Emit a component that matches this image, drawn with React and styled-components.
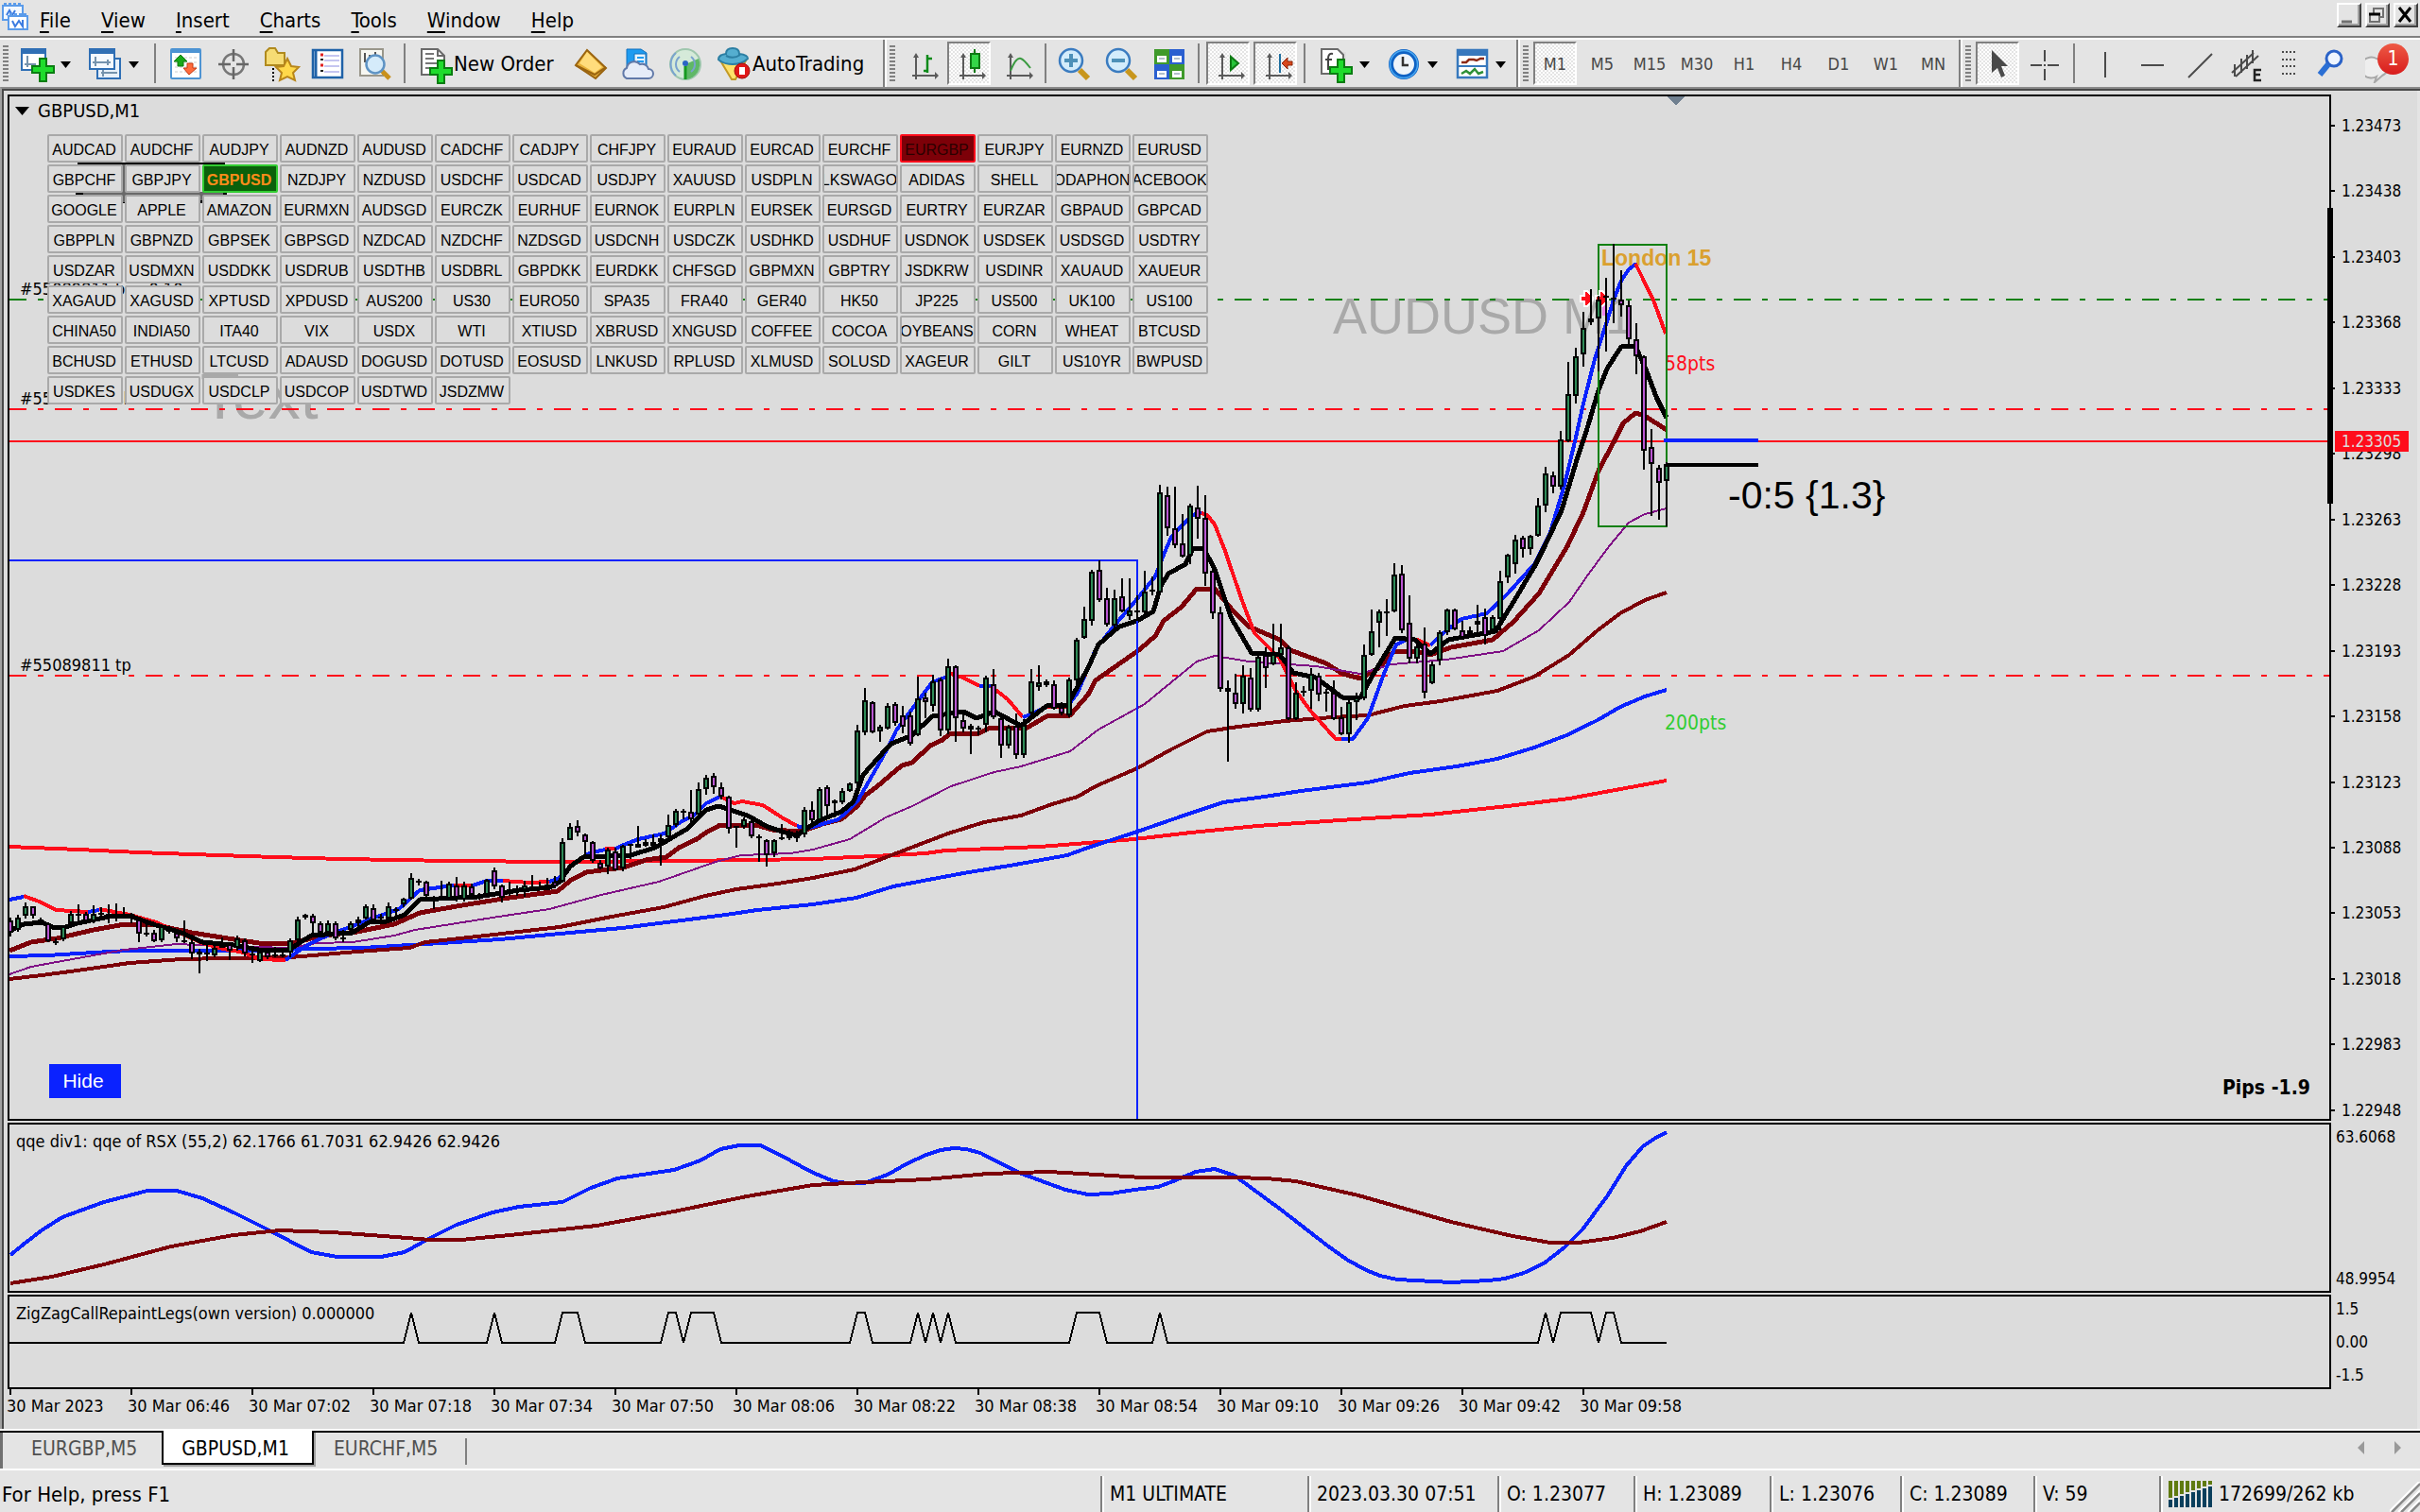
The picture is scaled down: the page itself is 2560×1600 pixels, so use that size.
import React from "react";
import styled, { createGlobalStyle, css } from "styled-components";

const UI = `"DejaVu Sans Condensed", "Noto Sans", "Liberation Sans", sans-serif`;
const ARIAL = `"Liberation Sans", Arial, sans-serif`;
const C = {
  chrome: "#e4e4e4",
  paper: "#dcdcdc",
  red: "#ff0d1b",
  blue: "#0a22ff",
  maroon: "#7d0008",
  green: "#108010",
  grey: "#808080",
};

const Global = createGlobalStyle`
  * { box-sizing: border-box; }
  body { margin: 0; background: ${C.chrome}; color: #000; font: 21px/26px ${UI}; }
  button { font: inherit; color: inherit; background: none; border: 0; padding: 0; margin: 0; }
`;

/* ---------- shell ---------- */
const Shell = styled.div`
  display: grid;
  grid-template-rows: auto auto minmax(0, 1fr) auto auto;
  height: 100vh;
  overflow: hidden;
`;

const MenuBar = styled.nav`
  display: flex;
  align-items: center;
  height: 42px;
  padding: 0 2px 4px 2px;
  border-bottom: 2px solid #fff;
  box-shadow: inset 0 -2px 0 ${C.grey};
`;
const MenuItem = styled.button`
  padding: 8px 16px 0;
  font-size: 22px;
  line-height: 28px;
  &::first-letter { text-decoration: underline; text-underline-offset: 4px; }
`;
const MenuIcon = styled.svg`
  width: 28px;
  height: 30px;
  margin-right: -4px;
`;
const WindowButtons = styled.div`
  display: flex;
  gap: 4px;
  margin-left: auto;
  padding-bottom: 4px;
`;
const WindowButton = styled.button`
  width: 26px;
  height: 26px;
  background: ${C.chrome};
  border: 2px solid;
  border-color: #fff #404040 #404040 #fff;
  box-shadow: inset -2px -2px 0 #a0a0a0;
  svg { display: block; width: 22px; height: 22px; }
`;

/* ---------- toolbar ---------- */
const ToolBar = styled.div`
  display: flex;
  align-items: center;
  gap: 4px;
  height: 50px;
  padding: 0 12px 0 2px;
`;
const Grip = styled.i`
  width: 8px;
  height: 38px;
  padding: 0 1px;
  background: repeating-linear-gradient(${C.grey} 0 2px, transparent 2px 4px) content-box;
`;
const Rule = styled.i`
  width: ${(p) => (p.$wide ? 12 : 8)}px;
  height: ${(p) => (p.$short ? 36 : 42)}px;
  background: linear-gradient(${C.grey}, ${C.grey}) center bottom / 2px ${(p) => (p.$short ? 28 : 42)}px no-repeat;
`;
const BandEdge = styled.i`
  width: 2px;
  height: 50px;
  background: ${C.grey};
  box-shadow: 2px 0 0 #fff;
`;
const pressed = css`
  border: 2px solid;
  border-color: ${C.grey} #fff #fff ${C.grey};
  background: conic-gradient(#fff 25%, ${C.chrome} 0 50%, #fff 0 75%, ${C.chrome} 0) 0 0 / 4px 4px;
`;
const Tool = styled.button`
  flex: none;
  display: flex;
  align-items: center;
  justify-content: ${(p) => (p.$start ? "flex-start" : "center")};
  width: ${(p) => p.$w || 46}px;
  height: 46px;
  padding-top: 2px;
  padding-left: ${(p) => (p.$start ? 8 : 0)}px;
  font-size: ${(p) => (p.$tf ? 18 : 22)}px;
  white-space: nowrap;
  ${(p) => p.$tf && `color: #484848;`}
  ${(p) => p["aria-pressed"] && pressed}
`;
const Icon = styled.svg`
  flex: none;
  width: 36px;
  height: 36px;
  overflow: visible;
`;
const Caret = styled.svg`
  width: 11px;
  height: 7px;
  margin-left: 6px;
`;
const Alerts = styled.button`
  position: relative;
  width: 46px;
  height: 42px;
  margin-left: auto;
`;
const Badge = styled.span`
  position: absolute;
  top: 0;
  right: 0;
  width: 33px;
  height: 33px;
  border-radius: 50%;
  background: linear-gradient(#ee5a45, #d81c1c);
  color: #fff;
  font-size: 21px;
  line-height: 33px;
  text-align: center;
`;

/* ---------- chart window ---------- */
const Workspace = styled.main`
  display: grid;
  grid-template-columns: minmax(0, 1fr) 94px;
  grid-template-rows: minmax(0, 1fr) 180px 100px 40px;
  row-gap: 2px;
  border-top: 2px solid #8a8a8a;
  border-left: 2px solid #a0a0a0;
  box-shadow: inset 2px 2px 0 #484848, inset -3px 0 0 ${C.chrome};
  padding: 6px 0 0 6px;
  background: ${C.paper};
  font-size: 18px;
  line-height: 22px;
`;
const Pane = styled.section`
  position: relative;
  border: 2px solid #000;
  overflow: hidden;
`;
const Plot = styled.svg`
  position: absolute;
  inset: 0;
  width: 100%;
  height: 100%;
  fill: none;
  shape-rendering: crispEdges;
`;
const PaneTitle = styled.h2`
  position: relative;
  display: flex;
  align-items: center;
  gap: 9px;
  margin: 0;
  padding: ${(p) => (p.$main ? "4px 6px" : "7px 7px")};
  font-size: ${(p) => (p.$main ? 20 : 18)}px;
  font-weight: 400;
  line-height: 22px;
`;
const Note = styled.span`
  position: absolute;
  left: ${(p) => p.$x}px;
  top: ${(p) => p.$y}px;
  color: ${(p) => p.$color || "#000"};
  font-family: ${(p) => (p.$arial ? ARIAL : UI)};
  font-size: ${(p) => p.$size || 18}px;
  font-weight: ${(p) => (p.$bold ? 700 : 400)};
  line-height: 1;
  white-space: nowrap;
`;
const Pips = styled.strong`
  position: absolute;
  right: 20px;
  bottom: 21px;
  font-size: 21px;
  line-height: 24px;
`;
const HideButton = styled.button`
  position: absolute;
  left: 42px;
  bottom: 22px;
  width: 76px;
  height: 36px;
  padding-right: 4px;
  background: ${C.blue};
  color: #fff;
  font: 21px/36px ${ARIAL};
`;
const SymbolGrid = styled.div`
  position: relative;
  display: grid;
  grid-template-columns: repeat(15, 80px);
  grid-auto-rows: 30px;
  gap: 2px;
  margin: 10px 0 0 40px;
`;
const tones = {
  up: css`background: #0b600b; border-color: #32cd32; color: #ff8c1a; font-weight: 700;`,
  down: css`background: #7d0008; border-color: ${C.red}; color: #2b0000;`,
};
const SymbolButton = styled.button`
  display: flex;
  align-items: center;
  justify-content: center;
  padding: 3px 2px 0 0;
  border: 2px solid #a9a9a9;
  border-radius: 2px;
  background: ${C.paper};
  font: 16px/23px ${ARIAL};
  overflow: hidden;
  white-space: nowrap;
  ${(p) => tones[p.$tone]}
`;
const Axis = styled.ol`
  position: relative;
  display: flex;
  flex-direction: column;
  justify-content: space-between;
  margin: 0;
  padding: ${(p) => p.$pad || "0"};
  list-style: none;
  font-size: 17px;
  line-height: 22px;
`;
const AxisMark = styled.li`
  display: flex;
  align-items: center;
  gap: ${(p) => (p.$tick ? 7 : 5)}px;
  &::before {
    content: "";
    width: ${(p) => (p.$tick ? 4 : 0)}px;
    height: 2px;
    background: #000;
  }
`;
const PriceNow = styled.li`
  position: absolute;
  left: 4px;
  top: 356px;
  width: 78px;
  height: 22px;
  padding-left: 7px;
  background: ${C.red};
  color: ${C.paper};
`;
const RangeBar = styled.li`
  position: absolute;
  left: -4px;
  top: 120px;
  width: 6px;
  height: 313px;
  background: #000;
`;
const TimeAxis = styled.ol`
  display: flex;
  grid-column: 1 / -1;
  margin: -2px 0 0 -1px;
  padding: 0;
  list-style: none;
`;
const TimeMark = styled.li`
  flex: none;
  width: 128px;
  white-space: nowrap;
  line-height: 24px;
  &::before {
    content: "";
    display: block;
    width: 2px;
    height: 6px;
    margin-left: 3px;
    background: #000;
  }
`;

/* ---------- tabs and status ---------- */
const TabBar = styled.div`
  display: flex;
  height: 44px;
  padding: 0 20px 4px 12px;
  border-top: 2px solid #fff;
  border-bottom: 2px solid #fff;
  box-shadow: inset 0 2px 0 #000, inset 3px 0 0 #707070;
`;
const Tab = styled.button`
  padding: 0 26px 0 21px;
  color: #505050;
  font-size: 21px;
  line-height: 38px;
  ${(p) => p["aria-selected"] && css`
    background: #fff;
    color: #000;
    border: solid #000;
    border-width: 0 2px 2px 2px;
    padding: 0 24px 0 19px;
    box-shadow: 2px 2px 0 #a0a0a0;
  `}
`;
const TabScroll = styled.div`
  display: flex;
  gap: 32px;
  margin-left: auto;
  align-items: center;
`;
const StatusBar = styled.footer`
  display: flex;
  height: 44px;
  padding: 6px 0 0;
  line-height: 41px;
`;
const Cell = styled.span`
  flex: none;
  display: flex;
  align-items: center;
  gap: 7px;
  width: ${(p) => p.$w}px;
  height: 38px;
  padding-left: 8px;
  border-left: 2px solid ${C.grey};
  box-shadow: inset 2px 0 0 #fff;
  white-space: nowrap;
`;
const HelpCell = styled.span`
  flex: 1;
  padding-left: 2px;
  font-size: 22px;
  line-height: 40px;
`;
const Bars = styled.svg`
  width: 46px;
  height: 28px;
`;
const Corner = styled.svg`
  width: 32px;
  height: 32px;
  margin-left: auto;
  align-self: flex-end;
`;

/* ---------- icon drawings ---------- */
const Plus = ({ x = 12, y = 12 }) => (
  <path
    transform={`translate(${x} ${y})`}
    d="M8 0h7v8h8v7h-8v9H8v-9H0V8h8z"
    fill="#1fdc2c"
    stroke="#0a7d12"
    strokeWidth="2"
  />
);
const Axes = () => (
  <>
    <path d="M12 34V9M8 30h26" stroke="#5a5a5a" strokeWidth="2" fill="none" />
    <path d="M12 6l-3 5h6zM36 30l-4-4v8z" fill="#5a5a5a" />
  </>
);
const icons = {
  newChart: (
    <>
      <rect x="1" y="2" width="25" height="22" fill="#fff" stroke="#2f6fb5" strokeWidth="2" />
      <path d="M1 3h25v4H1z" fill="#2f6fb5" />
      <path d="M7 9v12M4 18h12" stroke="#7593ad" strokeWidth="2" />
      <Plus />
    </>
  ),
  profiles: (
    <>
      <rect x="9" y="12" width="24" height="21" fill="#e8f1fa" stroke="#2f6fb5" strokeWidth="2" />
      <path d="M13 27h17M15 24v7" stroke="#7593ad" strokeWidth="2" />
      <rect x="1" y="2" width="26" height="21" fill="#f4f9ff" stroke="#2f6fb5" strokeWidth="2" />
      <path d="M1 3h26v4H1z" fill="#2f6fb5" />
      <path d="M7 10v10M4 16h19M20 13v6" stroke="#7593ad" strokeWidth="2" />
    </>
  ),
  market: (
    <>
      <rect x="2" y="2" width="31" height="31" rx="1" fill="#fff" stroke="#4d94d3" strokeWidth="2" />
      <path d="M2 2h31v4H2z" fill="#4d94d3" />
      <path d="M6 11h24M6 16h24M6 21h24M6 26h24" stroke="#ccc" strokeDasharray="3 2" />
      <path d="M12 8l7 7h-4v5H9v-5H5z" fill="#18a818" stroke="#0b7a0b" />
      <path d="M21 29l-6-7h4v-5h6v5h4z" fill="#ff6a3c" stroke="#c43a12" />
    </>
  ),
  target: (
    <>
      <circle cx="18" cy="18" r="11" fill="none" stroke="#777" strokeWidth="2.5" />
      <path d="M18 2v13M18 21v13M2 18h13M21 18h13" stroke="#666" strokeWidth="2.5" />
    </>
  ),
  favorites: (
    <>
      <path d="M2 5l4-4h6l3 5h7v13H2z" fill="#f6dc74" stroke="#b08a1e" strokeWidth="2" />
      <path d="M10 22v14" stroke="#000" strokeWidth="2" strokeDasharray="2 2" />
      <path d="M25 12l4 8 8 1-6 6 2 8-8-4-8 4 2-8-6-6 8-1z" fill="#ffd94a" stroke="#b8861b" strokeWidth="2" />
    </>
  ),
  navigator: (
    <>
      <rect x="2" y="3" width="31" height="29" fill="#fff" stroke="#1f62a8" strokeWidth="2.5" />
      <path d="M5 4v27" stroke="#1f62a8" strokeWidth="3" />
      <path d="M14 9h16M14 14h16M14 20h16M14 26h16" stroke="#c5c5f0" strokeWidth="2" />
      <path d="M10 8h3M10 19h3" stroke="#e02020" strokeWidth="3" />
      <path d="M10 13h3M10 25h3" stroke="#222" strokeWidth="2" />
    </>
  ),
  tester: (
    <>
      <path d="M2 2h24v28H2z" fill="#f7f7f2" stroke="#99968a" strokeWidth="2" />
      <path d="M7 6v10M18 5v8M12 8v6" stroke="#555" strokeWidth="2" />
      <path d="M25 25l8 8" stroke="#c8901c" strokeWidth="5" />
      <circle cx="18" cy="18" r="9.5" fill="#d5ebfa" stroke="#5e93c4" strokeWidth="2.5" />
    </>
  ),
  order: (
    <>
      <path d="M2 2h17l7 7v20H2z" fill="#fff" stroke="#6a6a6a" strokeWidth="2" />
      <path d="M19 2v7h7" fill="none" stroke="#6a6a6a" strokeWidth="2" />
      <path d="M6 7h9M6 12h9M6 17h14M6 22h8" stroke="#777" strokeWidth="2" />
      <Plus x={11} y={14} />
    </>
  ),
  gold: (
    <>
      <path d="M14 3l20 19-11 11L2 19z" fill="#e9b23a" stroke="#9a6410" strokeWidth="2" />
      <path d="M14 5l16 16-8 6L6 17z" fill="#ffdc7c" />
      <path d="M2 19l20 10 12-8" fill="none" stroke="#9a6410" strokeWidth="2" />
    </>
  ),
  cloud: (
    <>
      <path d="M6 2h15l6 4v18H6z" fill="#1e9bf0" stroke="#1270bd" />
      <path d="M14 7h12v13H14z" fill="#e9f5ff" stroke="#1270bd" />
      <path d="M17 11h7M17 15h7" stroke="#1e9bf0" strokeWidth="2" />
      <path d="M6 33a6 6 0 010-11 8 8 0 0114-4 7 7 0 019 5 5 5 0 010 10z" fill="#e6ecf8" stroke="#6179a8" strokeWidth="2" />
    </>
  ),
  signal: (
    <>
      <circle cx="18" cy="18" r="16" fill="#d5ead9" stroke="#9fc7ae" strokeWidth="2" />
      <path d="M18 18l1 16a16 16 0 0013-22z" fill="#5fb867" />
      <path d="M8 30A16 16 0 018 6M12 26a10 10 0 010-16M24 10a10 10 0 010 16" fill="none" stroke="#7aa3cf" strokeWidth="2" />
      <circle cx="18" cy="17" r="3" fill="#2b64c4" />
      <path d="M18 20v14" stroke="#169a20" strokeWidth="3" />
    </>
  ),
  auto: (
    <>
      <path d="M2 14l12 20h4l11-20z" fill="#ffe169" stroke="#c39a24" strokeWidth="2" />
      <path d="M0 13q0-5 8-6 0-6 7-6t7 6q9 1 9 5-6 6-16 6T0 13z" fill="#55aed0" stroke="#2c7fa3" strokeWidth="2" />
      <path d="M8 9q8 4 15-1" stroke="#2c7fa3" fill="none" strokeWidth="2" />
      <circle cx="25" cy="25" r="8" fill="#e01818" stroke="#a30e0e" />
      <path d="M22 21h6v8h-6z" fill="#fff" />
    </>
  ),
  bars: (
    <>
      <Axes />
      <path d="M24 8v19M24 12h5M20 25h4" stroke="#0e8a1a" strokeWidth="2.5" />
    </>
  ),
  candles: (
    <>
      <Axes />
      <path d="M24 2v25" stroke="#0e7a14" strokeWidth="2" />
      <path d="M20 7h9v15h-9z" fill="#35d648" stroke="#0e7a14" strokeWidth="2" />
    </>
  ),
  line: (
    <>
      <Axes />
      <path d="M12 25Q18 10 23 12q3 1 10 10" fill="none" stroke="#3a9a40" strokeWidth="2" />
    </>
  ),
  zoomIn: (
    <>
      <path d="M23 24l9 9" stroke="#c8961c" strokeWidth="6" />
      <circle cx="14" cy="14" r="12" fill="#d3ecfb" stroke="#3b7cc0" strokeWidth="2.5" />
      <path d="M14 7v14M7 14h14" stroke="#4d90b8" strokeWidth="4" />
    </>
  ),
  zoomOut: (
    <>
      <path d="M23 24l9 9" stroke="#c8961c" strokeWidth="6" />
      <circle cx="14" cy="14" r="12" fill="#d3ecfb" stroke="#3b7cc0" strokeWidth="2.5" />
      <path d="M7 14h14" stroke="#4d90b8" strokeWidth="4" />
    </>
  ),
  tiles: (
    <>
      <path d="M2 2h16v16H2zM18 18h16v16H18z" fill="#3f9a2b" />
      <path d="M18 2h16v16H18zM2 18h16v16H2z" fill="#2a5fd0" />
      <path d="M5 9h10v7H5zM21 9h10v7H21zM5 25h10v7H5zM21 25h10v7H21z" fill="#fff" />
      <path d="M7 12h6M23 12h6M7 28h6M23 28h6" stroke="#9ab" strokeWidth="1.5" />
    </>
  ),
  scroll: (
    <>
      <Axes />
      <path d="M21 10v14l8-7z" fill="#27c43a" stroke="#0e7a14" strokeWidth="2" />
    </>
  ),
  shift: (
    <>
      <Axes />
      <path d="M23 7v20" stroke="#1f6fa0" strokeWidth="2" />
      <path d="M25 17l6-6v4h5v4h-5v4z" fill="#d8481c" stroke="#8a2408" />
    </>
  ),
  indicators: (
    <>
      <path d="M8 5h20v24H8z" fill="#ddd" />
      <path d="M2 2h17l6 6v20H2z" fill="#fff" stroke="#6a6a6a" strokeWidth="2" />
      <path d="M14 7q-5-1-5 5v12M6 13h7" fill="none" stroke="#444" strokeWidth="2" />
      <Plus x={11} y={13} />
    </>
  ),
  clock: (
    <>
      <circle cx="17" cy="18" r="13.5" fill="#eef4fa" stroke="#0e62c4" strokeWidth="5" />
      <circle cx="17" cy="18" r="14.5" fill="none" stroke="#4aa9f2" strokeWidth="1.5" />
      <path d="M16 10v9h6" fill="none" stroke="#333" strokeWidth="2.5" />
    </>
  ),
  template: (
    <>
      <rect x="2" y="3" width="31" height="29" fill="#fff" stroke="#3778bd" strokeWidth="2.5" />
      <path d="M2 3h31v6H2z" fill="#3778bd" />
      <path d="M2 20h31" stroke="#3778bd" strokeWidth="2" />
      <path d="M6 16h5l3-3h5l3 1 4-2h4" fill="none" stroke="#8c2a16" strokeWidth="2.5" />
      <path d="M6 28l5-3 4 3 5-5 4 5 5-2" fill="none" stroke="#2f9038" strokeWidth="2.5" />
    </>
  ),
  cursor: <path d="M12 3v24l6-5 4 10 4-2-4-10h7z" fill="#4a4a4a" />,
  cross: <path d="M18 3v12M18 23v12M3 19h12M21 19h12M17 19h2" stroke="#4a4a4a" strokeWidth="2" />,
  vline: <path d="M20 5v27" stroke="#4a4a4a" strokeWidth="2" />,
  hline: <path d="M8 19h24" stroke="#4a4a4a" strokeWidth="2" />,
  trend: <path d="M8 32L33 7" stroke="#4a4a4a" strokeWidth="2" />,
  channel: (
    <>
      <path d="M4 27L27 6M8 31l24-22M7 18v13M14 12v15M20 8v15M26 3v14" stroke="#4a4a4a" strokeWidth="2" />
      <path d="M35 24h-7v11h7M28 29h6" fill="none" stroke="#222" strokeWidth="2.5" />
    </>
  ),
  grid: <path d="M7 5h15M7 13h15M7 20h15M7 28h15" stroke="#4a4a4a" strokeWidth="2" strokeDasharray="2 2" />,
  search: (
    <>
      <circle cx="20" cy="12" r="8" fill="#eef5ff" stroke="#2a62c8" strokeWidth="3" />
      <path d="M14 18L5 29" stroke="#2b6fd4" strokeWidth="6" />
    </>
  ),
};

const Glyph = ({ name }) => <Icon viewBox="0 0 36 36" aria-hidden="true">{icons[name]}</Icon>;
const Drop = () => (
  <Caret viewBox="0 0 11 7" aria-hidden="true">
    <path d="M0 0h11L5.500 7z" fill="#000" />
  </Caret>
);
const IconTool = ({ name, label, drop, on }) => (
  <Tool aria-label={label} aria-pressed={on} $w={drop ? 68 : undefined} $start={drop}>
    <Glyph name={name} />
    {drop && <Drop />}
  </Tool>
);

/* ---------- data ---------- */
const symbols = `AUDCAD AUDCHF AUDJPY AUDNZD AUDUSD CADCHF CADJPY CHFJPY EURAUD EURCAD EURCHF EURGBP EURJPY EURNZD EURUSD
GBPCHF GBPJPY GBPUSD NZDJPY NZDUSD USDCHF USDCAD USDJPY XAUUSD USDPLN LKSWAGO ADIDAS SHELL ODAPHON ACEBOOK
GOOGLE APPLE AMAZON EURMXN AUDSGD EURCZK EURHUF EURNOK EURPLN EURSEK EURSGD EURTRY EURZAR GBPAUD GBPCAD
GBPPLN GBPNZD GBPSEK GBPSGD NZDCAD NZDCHF NZDSGD USDCNH USDCZK USDHKD USDHUF USDNOK USDSEK USDSGD USDTRY
USDZAR USDMXN USDDKK USDRUB USDTHB USDBRL GBPDKK EURDKK CHFSGD GBPMXN GBPTRY JSDKRW USDINR XAUAUD XAUEUR
XAGAUD XAGUSD XPTUSD XPDUSD AUS200 US30 EURO50 SPA35 FRA40 GER40 HK50 JP225 US500 UK100 US100
CHINA50 INDIA50 ITA40 VIX USDX WTI XTIUSD XBRUSD XNGUSD COFFEE COCOA OYBEANS CORN WHEAT BTCUSD
BCHUSD ETHUSD LTCUSD ADAUSD DOGUSD DOTUSD EOSUSD LNKUSD RPLUSD XLMUSD SOLUSD XAGEUR GILT US10YR BWPUSD
USDKES USDUGX USDCLP USDCOP USDTWD JSDZMW`.split(/\s+/);

/* one entry a minute: direction, high, body top, body bottom, low */
const candles = `p971,974,987,991 g968,971,984,986 g955,959,969,972 p959,959,969,972 p971,973,977,978 p976,977,996,997 d993,996,998,1000 g979,980,994,996 g964,967,977,980 d957,967,969,977
p965,967,975,977 g958,967,975,977 d960,966,968,971 g957,967,971,977 d956,968,970,975 d960,968,970,972 p966,967,971,977 p970,973,988,997 d978,987,989,991 p984,987,996,997
g978,980,995,997 p980,982,986,988 p985,987,993,997 d974,995,997,998 p994,997,1009,1015 p1004,1007,1010,1030 d997,1008,1010,1017 g1001,1003,1011,1013 d992,1001,1002,1003 p997,999,1006,1016
g990,993,1003,1006 p993,995,1009,1012 d1006,1009,1011,1019 g1004,1007,1017,1018 p1003,1007,1013,1015 d1002,1010,1012,1013 d1003,1010,1012,1013 g993,995,1008,1013 g970,973,995,997 d967,968,971,973
p967,969,977,987 p975,977,987,991 g974,977,987,990 p975,977,993,995 d984,992,994,997 g975,977,984,987 g970,973,977,980 g957,959,972,973 p957,961,974,977 d967,970,972,977
g955,959,972,973 d960,962,964,970 g950,951,957,960 g924,929,951,952 d930,932,934,937 p932,933,948,951 d948,950,952,962 g932,949,951,953 g933,935,951,953 p928,937,950,954
g933,937,952,954 p935,938,947,951 d945,947,949,952 g930,931,947,948 p918,921,938,941 p936,937,950,955 g933,942,945,948 d937,940,942,948 g932,937,942,949 d926,939,941,942
d933,938,940,942 g929,936,938,940 p927,933,938,940 g887,891,933,934 g871,875,889,889 p868,874,881,885 p882,883,891,905 p890,891,911,913 p910,913,919,920 g897,899,917,925
p897,901,921,921 g894,895,919,922 d893,893,895,909 g874,893,897,897 g888,891,895,896 g883,891,895,897 g883,887,891,916 g862,873,886,887 g856,858,873,875 d856,858,860,867
p836,859,867,870 g828,835,862,863 g820,823,835,841 p818,821,833,840 p828,833,843,846 p842,843,877,882 d874,874,876,897 g865,867,875,877 p863,869,885,887 d883,885,887,912
p888,889,905,917 g888,889,903,907 d872,886,888,889 d878,884,887,889 d879,884,887,891 g854,857,883,886 p848,857,868,870 g833,835,868,870 p831,833,853,862 g846,847,850,865
g834,837,849,851 g828,829,837,838 g767,773,829,831 g728,741,775,778 p742,743,775,776 g767,769,774,785 g744,747,771,772 p743,745,765,768 p747,757,769,776 p753,757,787,789
g716,739,778,779 p733,738,743,760 g714,721,747,753 p717,719,773,779 g697,705,773,777 p704,705,760,785 p756,762,771,775 d766,768,772,798 d768,770,772,778 g715,717,767,775
p708,724,759,761 p758,760,789,802 g767,769,789,792 p755,768,799,803 g761,767,799,802 g708,721,755,757 g704,722,727,731 p719,721,725,727 p720,724,750,751 p743,748,755,757
g717,719,757,759 g675,677,720,724 g642,655,675,676 g603,605,657,662 p593,603,635,637 p622,633,661,663 g624,633,662,664 p612,631,647,648 g612,646,652,656 d630,646,648,657
g604,626,648,650 d610,624,626,630 g513,521,627,629 p515,524,559,567 p515,559,577,580 p544,575,589,590 g533,535,588,597 p514,537,549,570 p524,548,607,620 p603,604,649,655
p642,648,729,732 d720,728,732,806 p713,733,745,750 g704,715,745,755 p707,717,751,753 g693,695,751,753 p685,693,707,728 g660,692,703,704 g660,685,693,694 p683,685,761,762
g722,733,761,762 d726,731,733,737 g707,713,731,750 p712,715,735,742 d729,732,734,753 p720,733,761,762 p748,759,777,778 g738,743,777,786 g733,738,743,762 g682,693,739,741
g645,668,693,694 g645,647,659,685 d634,647,649,673 g596,608,647,648 p598,607,667,670 p630,659,697,702 g679,684,697,702 p664,681,733,739 g700,703,723,724 g667,669,699,704
g644,645,669,672 p644,645,666,667 p657,667,675,677 g663,667,671,672 g640,657,661,671 p644,653,673,682 g651,653,667,670 g604,615,655,667 g586,587,611,617 g566,571,597,607
p567,569,581,590 g566,567,581,587 g527,535,567,568 g494,501,535,542 p499,503,515,522 g456,465,515,518 g383,417,467,468 g368,377,419,427 g330,347,375,388 g306,337,341,344
g313,317,337,393 d294,313,315,372 d258,315,317,342 p286,317,323,335 p318,323,359,365 p342,359,377,396 p376,377,477,497 p454,473,491,546 p492,495,511,550 g489,491,509,557`
  .split(/\s+/)
  .map((s, i) => ({ x: 11 + i * 8, kind: s[0], v: s.slice(1).split(",").map(Number) }));

const averages = [
  [C.red, 4, "10,896 83,899 147,902 203,904 291,907 362,909 477,911 592,912 724,911 860,909 925,906 979,903 1000,900 1100,896 1200,888 1260,881 1330,874 1447,866 1513,862 1595,853 1660,845 1698,838 1763,826"],
  [C.blue, 4, "10,1012 50,1011 99,1008 137,1006 258,1006 329,1004 384,1003 450,999 529,994 603,987 658,982 713,975 768,968 801,963 860,957 906,950 945,938 1019,924 1074,915 1129,905 1151,897 1203,880 1255,862 1294,849 1338,843 1376,837 1447,828 1491,818 1541,811 1584,803 1623,791 1660,777 1690,762 1714,748 1740,737 1763,730"],
  [C.maroon, 4, "10,1036 44,1032 82,1027 137,1019 192,1015 236,1014 307,1013 378,1007 433,1003 450,997 505,991 592,981 647,970 702,960 746,948 779,941 823,935 860,929 904,920 948,903 1003,882 1041,870 1080,863 1113,851 1140,843 1159,832 1203,813 1239,793 1277,774 1310,769 1359,763 1409,759 1447,757 1486,747 1524,742 1584,731 1623,716 1660,693 1690,667 1714,649 1740,635 1763,627"],
  [C.maroon, 5, "10,1006 33,997 60,993 99,984 132,978 165,979 203,987 241,993 274,998 307,999 329,993 351,989 378,986 417,978 444,966 483,959 532,951 590,943 603,932 620,923 660,918 683,910 705,907 718,897 737,888 747,881 762,873 800,873 817,878 847,880 870,872 890,867 907,853 915,842 927,833 954,810 965,807 984,789 997,783 1004,777 1036,776 1047,770 1085,771 1107,758 1132,757 1151,735 1159,720 1206,687 1222,673 1231,657 1250,642 1266,623 1285,623 1305,647 1321,663 1354,677 1365,688 1403,702 1420,713 1439,718 1458,707 1475,689 1497,689 1513,693 1535,685 1579,677 1601,658 1628,628 1658,578 1675,542 1691,498 1707,468 1717,448 1730,437 1740,440 1763,455"],
  ["#7f0f85", 2, "10,1031 33,1023 71,1016 132,1005 187,999 230,1001 307,1003 335,998 373,997 417,990 439,984 521,971 581,962 636,947 697,933 757,912 784,905 836,903 860,899 899,888 937,865 965,853 1006,832 1052,817 1080,811 1132,795 1162,772 1211,745 1239,722 1266,700 1285,694 1321,700 1392,705 1439,713 1472,703 1530,698 1590,689 1628,667 1660,637 1680,608 1703,577 1723,553 1740,544 1763,538"],
  [C.red, 4, "25,948 44,955 59,963 93,965"],
  [C.blue, 4, "10,952 25,949"],
  [C.blue, 4, "93,965 105,963"],
  [C.red, 4, "105,962 137,968 165,976 192,988 214,998 236,1004 258,1008 274,1015 302,1016"],
  [C.blue, 4, "302,1016 315,1007 329,998 351,988 373,980 390,973 422,962 444,942 472,938 480,937"],
  [C.red, 4, "480,937 500,937"],
  [C.blue, 4, "500,937 515,932 532,932"],
  [C.red, 4, "532,932 560,934 581,933"],
  [C.blue, 4, "581,933 590,930 603,917 623,903 640,899"],
  [C.red, 4, "640,898 651,898"],
  [C.blue, 4, "651,898 660,894 675,888 703,882 720,870 735,862 747,850 762,843"],
  [C.red, 4, "762,843 777,850 785,848 807,852 827,865 843,874"],
  [C.blue, 4, "843,874 853,877 887,867 907,848 927,813 940,790 948,773 965,750 986,722 1002,716"],
  [C.red, 4, "1002,714 1006,713 1019,717 1036,726"],
  [C.blue, 4, "1036,726 1048,726"],
  [C.red, 4, "1048,726 1066,740 1082,759"],
  [C.blue, 4, "1082,759 1090,756 1107,748"],
  [C.red, 4, "1107,748 1129,748"],
  [C.blue, 4, "1129,748 1140,733 1159,687 1178,663 1206,630 1222,610 1231,587 1239,568 1261,545 1271,543"],
  [C.red, 4, "1271,543 1277,545 1285,555 1296,583 1313,633 1327,670 1354,697 1370,730 1387,753 1413,782 1419,782"],
  [C.blue, 4, "1419,782 1431,782 1447,760 1464,713 1477,682 1488,677"],
  [C.red, 4, "1488,676 1499,677 1513,683"],
  [C.blue, 4, "1513,683 1524,672 1546,655 1573,649 1595,628 1623,597 1640,563 1655,513 1667,463 1675,427 1687,380 1700,340 1707,317 1715,297 1723,285 1731,279"],
  [C.red, 4, "1730,279 1738,295 1750,320 1762,353"],
  ["#000", 5, "10,985 25,978 44,976 55,981 69,981 82,977 115,970 137,969 165,979 192,987 214,997 247,1000 274,1005 304,1006 329,990 373,987 390,976 409,975 428,968 444,952 505,949 549,942 582,939 592,933 603,917 617,907 667,905 693,897 727,877 747,857 760,853 773,857 793,864 810,874 827,880 843,884 853,877 867,868 890,859 903,848 913,820 937,793 943,787 965,778 986,758 1019,753 1033,760 1052,753 1080,768 1107,747 1129,746 1151,707 1162,682 1184,663 1203,657 1220,647 1228,620 1236,607 1254,597 1262,580 1273,580 1285,602 1302,653 1324,691 1354,693 1368,712 1392,717 1420,738 1439,738 1453,713 1476,675 1497,677 1513,692 1532,677 1582,668 1601,637 1623,600 1634,578 1652,540 1667,490 1680,450 1691,413 1700,390 1715,367 1730,366 1742,393 1752,420 1763,442"],
];

const qqe = [
  [C.blue, "11,1328 27,1315 44,1302 66,1288 110,1272 156,1260 187,1260 214,1268 247,1283 285,1302 329,1325 357,1330 403,1330 428,1325 455,1310 483,1296 521,1283 549,1277 595,1272 625,1257 653,1247 713,1238 741,1228 762,1216 782,1212 804,1212 823,1221 860,1241 882,1250 896,1252 914,1252 939,1243 960,1231 980,1222 995,1217 1009,1215 1022,1216 1037,1220 1078,1241 1127,1259 1151,1264 1175,1263 1200,1259 1225,1256 1241,1250 1265,1240 1285,1237 1306,1244 1355,1280 1404,1318 1425,1333 1445,1344 1460,1350 1478,1354 1535,1357 1575,1355 1592,1353 1612,1347 1633,1337 1655,1320 1674,1301 1700,1266 1720,1234 1738,1213 1750,1205 1763,1198"],
  [C.maroon, "11,1358 55,1351 110,1338 181,1319 247,1307 296,1302 351,1304 406,1308 455,1312 488,1312 549,1306 631,1297 713,1282 790,1266 860,1254 914,1251 980,1248 1045,1242 1110,1240 1160,1243 1208,1246 1306,1246 1340,1247 1371,1250 1437,1265 1535,1293 1600,1308 1640,1315 1670,1315 1706,1310 1735,1303 1763,1293"],
];

const LOW = 1421;
const HIGH = 1389;
const zigzag = [
  [427, 435, 435, 443], [515, 523, 523, 531], [587, 595, 611, 619], [699, 707, 715, 723], [723, 731, 755, 763],
  [899, 907, 915, 923], [963, 971, 971, 979], [979, 987, 987, 995], [995, 1003, 1003, 1011], [1131, 1139, 1163, 1171],
  [1219, 1227, 1227, 1235], [1627, 1635, 1635, 1643], [1643, 1651, 1683, 1691], [1691, 1699, 1707, 1715],
];
const zigzagPoints = `10,${LOW} ${zigzag
  .map(([a, b, c, d]) => `${a},${LOW} ${b},${HIGH} ${c},${HIGH} ${d},${LOW}`)
  .join(" ")} 1763,${LOW}`;

const prices = ["1.23473", "1.23438", "1.23403", "1.23368", "1.23333", "1.23298", "1.23263", "1.23228", "1.23193", "1.23158", "1.23123", "1.23088", "1.23053", "1.23018", "1.22983", "1.22948"];
const times = ["2023", "06:46", "07:02", "07:18", "07:34", "07:50", "08:06", "08:22", "08:38", "08:54", "09:10", "09:26", "09:42", "09:58"];
const frames = ["M1", "M5", "M15", "M30", "H1", "H4", "D1", "W1", "MN"];

const bodyFill = { g: "#2e8b57", p: "#ba55d3", d: "#000" };

function Candle({ x, kind, v: [high, top, bottom, low] }) {
  return (
    <g>
      <rect x={x - 1} y={high} width="2" height={Math.max(2, low - high)} fill="#000" />
      <rect x={x - 3} y={top} width="6" height={Math.max(2, bottom - top)} fill="#000" />
      {kind !== "d" && bottom - top > 4 && (
        <rect x={x - 1} y={top + 2} width="2" height={bottom - top - 4} fill={bodyFill[kind]} />
      )}
    </g>
  );
}

const Level = ({ y, color, dashed }) => (
  <line x1="10" x2="101%" y1={y} y2={y} stroke={color} strokeWidth="2" strokeDasharray={dashed ? "18 12 6 12" : undefined} />
);

const EntryArrow = ({ x }) => (
  <path
    transform={`translate(${x} 316)`}
    d="M-5-3h4v-5h3l6 7v2l-6 7h-3V3h-4z"
    fill={C.red}
    stroke="#fff"
    strokeWidth="2"
  />
);

function PricePane() {
  return (
    <Pane>
      <Note $x={1400} $y={205} $size={54} $color="#a9a9a9" $arial>AUDUSD M1</Note>
      <Note $x={202} $y={283} $size={68} $color="#a9a9a9" $arial>Text</Note>
      <Note $x={11} $y={195}>#55089811 buy 0.10</Note>
      <Note $x={11} $y={311}>#55089811 sl</Note>
      <Note $x={11} $y={593}>#55089811 tp</Note>
      <Note $x={1684} $y={160} $size={23} $color="#daa02f" $arial $bold>London 15</Note>
      <Note $x={1751} $y={273} $size={21} $color={C.red}>58pts</Note>
      <Note $x={1751} $y={653} $size={21} $color="#32cd32">200pts</Note>
      <Note $x={1818} $y={402} $size={41} $arial>-0:5 &#123;1.3&#125;</Note>
      <Plot aria-label="GBPUSD one minute chart">
        <g transform="translate(-10 -102)">
          <Level y={317} color={C.green} dashed />
          <Level y={433} color={C.red} dashed />
          <Level y={715} color={C.red} dashed />
          <Level y={467} color={C.red} />
          <path d="M82 173H238M131 206V215M213 206V215M80 205H240" stroke="#000" strokeWidth="2" />
          <path d="M131 174V214M213 206V212M88 205H236" stroke="#696969" strokeWidth="4" />
          {averages.map(([color, width, points], i) => (
            <polyline key={i} points={points} stroke={color} strokeWidth={width} strokeLinejoin="round" />
          ))}
          <path d="M10 593H1203V1190" stroke={C.blue} strokeWidth="2" />
          <rect x="1691" y="259" width="72" height="298" stroke={C.green} strokeWidth="2" />
          <path d="M1697 320v14" stroke="#ee82ee" strokeWidth="5" />
          <EntryArrow x={1677} />
          <EntryArrow x={1693} />
          {candles.map((c) => <Candle key={c.x} {...c} />)}
          <path d="M1760 466H1860" stroke={C.blue} strokeWidth="4" />
          <path d="M1762 492H1860" stroke="#000" strokeWidth="4" />
          <path d="M1764 102h18l-9 10z" fill="#708090" />
        </g>
      </Plot>
      <PaneTitle $main>
        <svg width="15" height="9" viewBox="0 0 15 9" aria-hidden="true"><path d="M0 0h15L7.500 9z" /></svg>
        GBPUSD,M1
      </PaneTitle>
      <SymbolGrid>
        {symbols.map((s) => (
          <SymbolButton key={s} $tone={{ GBPUSD: "up", EURGBP: "down" }[s]}>{s}</SymbolButton>
        ))}
      </SymbolGrid>
      <HideButton>Hide</HideButton>
      <Pips>Pips -1.9</Pips>
    </Pane>
  );
}

function ToolStrip() {
  return (
    <ToolBar role="toolbar">
      <Grip />
      <IconTool name="newChart" label="New chart" drop />
      <IconTool name="profiles" label="Profiles" drop />
      <Rule $wide />
      <IconTool name="market" label="Market watch" />
      <IconTool name="target" label="Data window" />
      <IconTool name="favorites" label="Navigator" />
      <IconTool name="navigator" label="Terminal" />
      <IconTool name="tester" label="Strategy tester" />
      <Rule />
      <Tool $w={162} $start><Glyph name="order" />New Order</Tool>
      <IconTool name="gold" label="MetaEditor" />
      <IconTool name="cloud" label="Virtual hosting" />
      <IconTool name="signal" label="Signals" />
      <Tool $w={178} $start><Glyph name="auto" />AutoTrading</Tool>
      <BandEdge />
      <Grip />
      <IconTool name="bars" label="Bar chart" />
      <IconTool name="candles" label="Candlesticks" on />
      <IconTool name="line" label="Line chart" />
      <Rule />
      <IconTool name="zoomIn" label="Zoom in" />
      <IconTool name="zoomOut" label="Zoom out" />
      <IconTool name="tiles" label="Tile windows" />
      <Rule />
      <IconTool name="scroll" label="Auto scroll" on />
      <IconTool name="shift" label="Chart shift" on />
      <Rule />
      <IconTool name="indicators" label="Indicators" drop />
      <IconTool name="clock" label="Periods" drop />
      <IconTool name="template" label="Templates" drop />
      <BandEdge />
      <Grip />
      {frames.map((f) => <Tool key={f} $tf aria-pressed={f === "M1" || undefined}>{f}</Tool>)}
      <BandEdge />
      <Grip />
      <IconTool name="cursor" label="Cursor" on />
      <IconTool name="cross" label="Crosshair" />
      <Rule />
      <IconTool name="vline" label="Vertical line" />
      <IconTool name="hline" label="Horizontal line" />
      <IconTool name="trend" label="Trendline" />
      <IconTool name="channel" label="Equidistant channel" />
      <IconTool name="grid" label="Fibonacci" />
      <Tool $w={30} aria-label="Search"><Glyph name="search" /></Tool>
      <Alerts aria-label="Notifications">
        <svg width="46" height="42" viewBox="0 0 46 42" aria-hidden="true">
          <path d="M12 16a11 11 0 100 19l-2 6 8-7a11 11 0 006-14z" fill="#eee" stroke="#a8a8a8" strokeWidth="2" />
        </svg>
        <Badge>1</Badge>
      </Alerts>
    </ToolBar>
  );
}

export default function App() {
  return (
    <>
      <Global />
      <Shell>
        <MenuBar>
          <MenuIcon viewBox="0 0 28 30" aria-hidden="true">
            <path d="M1 3h21v15H1z" fill="#f2f8ff" stroke="#5a9bea" strokeWidth="2" />
            <path d="M2 2h20" stroke="#5a9bea" strokeWidth="4" strokeDasharray="3 2" />
            <path d="M5 13l3-5 3 5 3-5" fill="none" stroke="#3b7be0" strokeWidth="2" />
            <path d="M7 14h20v14H7z" fill="#fff" stroke="#5a9bea" strokeWidth="2" />
            <path d="M8 13h19" stroke="#5a9bea" strokeWidth="4" strokeDasharray="3 2" />
            <path d="M11 19l3 6 4-6 4 6v-7" fill="none" stroke="#3b7be0" strokeWidth="2" />
          </MenuIcon>
          {["File", "View", "Insert", "Charts", "Tools", "Window", "Help"].map((m) => (
            <MenuItem key={m}>{m}</MenuItem>
          ))}
          <WindowButtons>
            <WindowButton aria-label="Minimize">
              <svg viewBox="0 0 22 22"><path d="M3 18h11" stroke="#707070" strokeWidth="3" /></svg>
            </WindowButton>
            <WindowButton aria-label="Restore">
              <svg viewBox="0 0 22 22">
                <path d="M7 9V4h10v9h-4" fill="none" stroke="#707070" strokeWidth="2" />
                <path d="M3 10h10v8H3z" fill="none" stroke="#707070" strokeWidth="2" />
                <path d="M2 10h12" stroke="#000" strokeWidth="3" />
              </svg>
            </WindowButton>
            <WindowButton aria-label="Close">
              <svg viewBox="0 0 22 22"><path d="M4 3l12 15M16 3L4 18" stroke="#000" strokeWidth="3" /></svg>
            </WindowButton>
          </WindowButtons>
        </MenuBar>

        <ToolStrip />

        <Workspace>
          <PricePane />
          <Axis $pad="22px 0 0">
            {prices.map((p) => <AxisMark key={p} $tick>{p}</AxisMark>)}
            <PriceNow>1.23305</PriceNow>
            <RangeBar />
          </Axis>

          <Pane>
            <PaneTitle>qqe div1: qqe of RSX (55,2) 62.1766 61.7031 62.9426 62.9426</PaneTitle>
            <Plot aria-label="QQE oscillator">
              <g transform="translate(-10 -1190)">
                {qqe.map(([color, points]) => (
                  <polyline key={color} points={points} stroke={color} strokeWidth="4" strokeLinejoin="round" />
                ))}
              </g>
            </Plot>
          </Pane>
          <Axis $pad="4px 0">
            <AxisMark>63.6068</AxisMark>
            <AxisMark>48.9954</AxisMark>
          </Axis>

          <Pane>
            <PaneTitle>ZigZagCallRepaintLegs(own version) 0.000000</PaneTitle>
            <Plot aria-label="ZigZag legs">
              <g transform="translate(-10 -1372)">
                <polyline points={zigzagPoints} stroke="#000" strokeWidth="2" />
              </g>
            </Plot>
          </Pane>
          <Axis $pad="4px 0">
            <AxisMark>1.5</AxisMark>
            <AxisMark>0.00</AxisMark>
            <AxisMark>-1.5</AxisMark>
          </Axis>

          <TimeAxis>
            {times.map((t) => <TimeMark key={t}>30 Mar {t}</TimeMark>)}
          </TimeAxis>
        </Workspace>

        <TabBar role="tablist">
          <Tab role="tab">EURGBP,M5</Tab>
          <Tab role="tab" aria-selected="true">GBPUSD,M1</Tab>
          <Tab role="tab">EURCHF,M5</Tab>
          <Rule $short />
          <TabScroll>
            <svg width="7" height="14" viewBox="0 0 7 14" aria-hidden="true"><path d="M7 0v14L0 7z" fill="#999" /></svg>
            <svg width="7" height="14" viewBox="0 0 7 14" aria-hidden="true"><path d="M0 0v14l7-7z" fill="#999" /></svg>
          </TabScroll>
        </TabBar>

        <StatusBar>
          <HelpCell>For Help, press F1</HelpCell>
          <Cell $w={219}>M1 ULTIMATE</Cell>
          <Cell $w={201}>2023.03.30 07:51</Cell>
          <Cell $w={144}>O: 1.23077</Cell>
          <Cell $w={144}>H: 1.23089</Cell>
          <Cell $w={138}>L: 1.23076</Cell>
          <Cell $w={141}>C: 1.23089</Cell>
          <Cell $w={133}>V: 59</Cell>
          <Cell $w={276}>
            <Bars viewBox="0 0 46 28" aria-hidden="true">
              {[0, 1, 2, 3, 4, 5, 6, 7].map((i) => (
                <g key={i}>
                  <rect x={i * 6} y="0" width="4" height={18 - i * 2} fill="#5f7a10" />
                  <rect x={i * 6} y={20 - i * 2} width="4" height={8 + i * 2} fill="#0a3f5c" />
                </g>
              ))}
            </Bars>
            172699/262 kb
            <Corner viewBox="0 0 32 32" aria-hidden="true">
              <path d="M2 32L32 2M12 32L32 12M22 32l10-10" stroke="#888" strokeWidth="3" />
              <path d="M-1 32L32-1M9 32L32 9M19 32l13-13" stroke="#fff" strokeWidth="2" />
            </Corner>
          </Cell>
        </StatusBar>
      </Shell>
    </>
  );
}
